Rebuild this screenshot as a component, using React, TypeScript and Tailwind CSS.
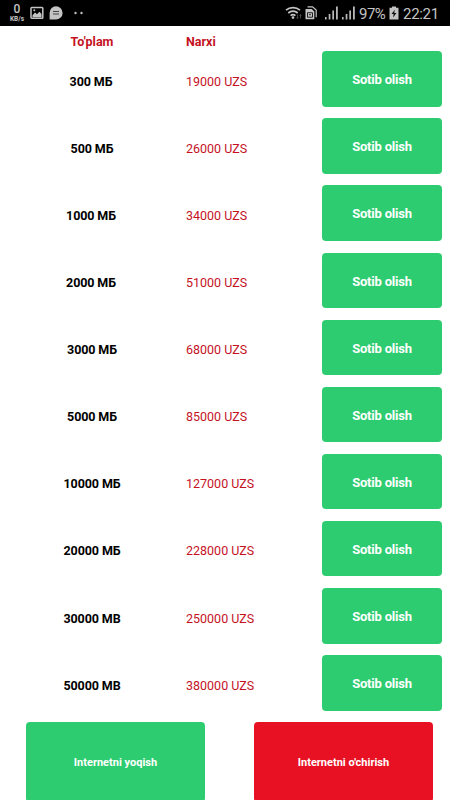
import React from 'react';

const rows = [
  { size: '300 МБ', price: '19000 UZS', inset: 'pl-0' },
  { size: '500 МБ', price: '26000 UZS', inset: 'pl-[2px]' },
  { size: '1000 МБ', price: '34000 UZS', inset: 'pl-0' },
  { size: '2000 МБ', price: '51000 UZS', inset: 'pl-0' },
  { size: '3000 МБ', price: '68000 UZS', inset: 'pl-[2px]' },
  { size: '5000 МБ', price: '85000 UZS', inset: 'pl-[2px]' },
  { size: '10000 МБ', price: '127000 UZS', inset: 'pl-[2px]' },
  { size: '20000 МБ', price: '228000 UZS', inset: 'pl-[2px]' },
  { size: '30000 MB', price: '250000 UZS', inset: 'pl-[2px]' },
  { size: '50000 MB', price: '380000 UZS', inset: 'pl-[2px]' },
];

function Signal() {
  return (
    <svg width="13" height="14" viewBox="0 0 13 14" fill="#b8b8b8">
      <rect x="0" y="11" width="1.6" height="2.500" />
      <rect x="3.7" y="8" width="1.700" height="5.500" />
      <rect x="7.3" y="4.5" width="1.700" height="9" />
      <rect x="11" y="0.5" width="1.8" height="13" />
    </svg>
  );
}

function StatusBar() {
  return (
    <header className="flex h-[26px] shrink-0 items-center bg-black text-[#c4c4c4]">
      <div className="ml-[9px] flex w-[16px] flex-col items-center">
        <span className="text-[12px] leading-[11px] font-medium">0</span>
        <span className="text-[6.5px] leading-[8px] font-bold">KB/s</span>
      </div>
      <svg className="ml-[5px]" width="14" height="14" viewBox="0 0 14 14">
        <rect x="1" y="1.4" width="11.8" height="10.8" rx="0.8" fill="none" stroke="#c4c4c4" strokeWidth="1.5" />
        <path d="M2.5 9.2 5 6.500 7 8.2 9.4 5.8 11.5 8v3.200h-9z" fill="#c4c4c4" />
        <circle cx="4.3" cy="4.2" r="1" fill="#c4c4c4" />
      </svg>
      <svg className="ml-[5px]" width="14" height="14" viewBox="0 0 14 14">
        <path d="M7 .3a6.600 6.600 0 1 1 0 13.200H.6V7A6.500 6.500 0 0 1 7 .3z" fill="#c4c4c4" />
        <path d="M4 5.500h6M4 8h6" stroke="#444" strokeWidth="1.2" />
      </svg>
      <svg className="ml-[11px]" width="10" height="4" viewBox="0 0 10 4" fill="#c0c0c0">
        <circle cx="1.5" cy="2" r="1.200" />
        <circle cx="7.5" cy="2" r="1.200" />
      </svg>
      <svg className="ml-[201px]" width="18" height="14" viewBox="0 0 18 14" fill="none">
        <path d="M1 4.200a10.500 10.500 0 0 1 14 0M3.300 7a7 7 0 0 1 9.400 0M5.600 9.600a3.700 3.700 0 0 1 4.800 0" stroke="#c4c4c4" strokeWidth="1.7" />
        <circle cx="8" cy="11.600" r="1.300" fill="#c4c4c4" />
        <path d="M12.500 8.500v4M11.500 11.500l1 1 1-1M15.500 12.500v-4M14.500 9.500l1-1 1 1" stroke="#555" strokeWidth=".8" />
      </svg>
      <svg className="ml-[2px]" width="12" height="14" viewBox="0 0 12 14" fill="none">
        <path d="M2.500 .8h5L11.200 4v7.200" stroke="#c4c4c4" strokeWidth="1.2" />
        <path d="M.5 3h6.200l2.600 2.500v7.800H.5z" fill="#c4c4c4" />
        <path d="M2.500 6.700h5v4.500h-5zM4 8.700h2" stroke="#222" strokeWidth="1" />
      </svg>
      <div className="ml-[8px] flex gap-[4px]"><Signal /><Signal /></div>
      <span className="ml-[4px] w-[27px] pt-[2px] text-[15px] leading-[24px] tracking-[-0.500px]">97%</span>
      <svg className="ml-[3px]" width="10" height="14" viewBox="0 0 10 14">
        <path d="M3 .5h4v1.300h2.500v11.700h-9V1.800H3z" fill="#c4c4c4" />
        <path d="M5.800 3.800 2.500 8.100H4.600L4.100 11.600 7.500 7.100H5.300z" fill="#111" />
      </svg>
      <span className="ml-[4px] whitespace-nowrap pt-[2px] text-[15px] leading-[24px] tracking-[-0.300px]">22:21</span>
    </header>
  );
}

export default function App() {
  return (
    <div className="flex h-[800px] w-[450px] flex-col overflow-hidden bg-white font-['Roboto',sans-serif]">
      <StatusBar />
      <main className="flex flex-1 flex-col">
        <div className="flex h-[25.300px] shrink-0 items-center pt-[5px] text-[12.500px] leading-[15px] font-bold text-[#c5121f]">
          <span className="w-[184px] text-center">To'plam</span>
          <span className="ml-[2px]">Narxi</span>
        </div>
        {rows.map((row) => (
          <div key={row.size} className="flex h-[67.100px] shrink-0 items-start text-[12.500px]">
            <span className={`w-[182px] pt-[4.500px] text-center leading-[52px] font-bold tracking-[-0.100px] text-black ${row.inset}`}>{row.size}</span>
            <span className="ml-[4px] w-[136px] pt-[4.500px] leading-[52px] text-[#c5121f]">{row.price}</span>
            <button className="h-[55.500px] w-[120px] rounded-[4px] bg-[#2ecc71] pt-[2px] text-[13px] font-bold tracking-[-0.200px] text-white">Sotib olish</button>
          </div>
        ))}
        <div className="ml-[26px] flex gap-[49px]">
          <button className="h-[80px] w-[179px] rounded-[4px] bg-[#2ecc71] pt-[2px] text-[11px] font-bold text-white">Internetni yoqish</button>
          <button className="h-[80px] w-[179px] rounded-[4px] bg-[#e81123] pt-[2px] text-[11px] font-bold text-white">Internetni o'chirish</button>
        </div>
      </main>
    </div>
  );
}
